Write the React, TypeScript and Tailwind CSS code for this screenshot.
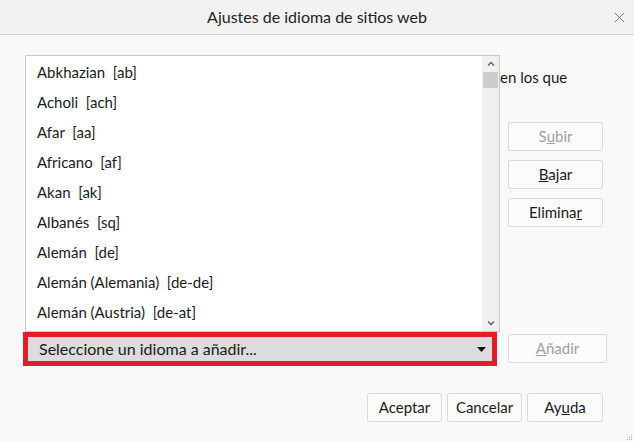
import { X } from "lucide-react";

const langs = [
  "Abkhazian  [ab]",
  "Acholi  [ach]",
  "Afar  [aa]",
  "Africano  [af]",
  "Akan  [ak]",
  "Albanés  [sq]",
  "Alemán  [de]",
  "Alemán (Alemania)  [de-de]",
  "Alemán (Austria)  [de-at]",
];

function Btn({ children, disabled, className }: any) {
  return (
    <div
      className={
        "h-[29px] flex items-center justify-center border border-[#dadada] bg-[#fbfbfb] rounded-[2px] text-[15px] " +
        (disabled ? "text-[#a0a0a0] " : "text-[#1a1a1a] ") +
        (className ?? "")
      }
    >
      {children}
    </div>
  );
}

export default function App() {
  return (
    <div
      className="w-[634px] h-[442px] bg-[#f9f9f9] text-[#1a1a1a] relative overflow-hidden"
      style={{ fontFamily: 'Lato, "Noto Sans", sans-serif' }}
    >
      {/* title bar */}
      <div className="h-[35px] bg-[#f2f2f2] border-b border-[#d2d2d2] flex items-center relative">
        <div className="flex-1 text-center text-[16px] text-[#222]">
          Ajustes de idioma de sitios web
        </div>
        <X className="absolute right-[6px] top-[9px] w-[17px] h-[17px] text-[#555]" strokeWidth={1.1} />
      </div>

      {/* intro text (mostly hidden by the open popup) */}
      <div className="flex pt-[32px] text-[15px] leading-[20px]">
        <span className="w-[500px] pl-[25px] overflow-hidden whitespace-nowrap text-right">
          Algunas páginas web se ofrecen en más de un idioma. Elija los idiomas
        </span>
        <span>en los que</span>
      </div>

      {/* active languages + move buttons */}
      <div className="flex pl-[25px] pr-[31px] mt-[35px] h-[200px] gap-[8px]">
        <div className="flex-1" />
        <div className="w-[95px] flex flex-col gap-[9px]">
          <Btn disabled>
            S<span className="underline">u</span>bir
          </Btn>
          <Btn>
            <span className="underline">B</span>ajar
          </Btn>
          <Btn>
            Elimina<span className="underline">r</span>
          </Btn>
        </div>
      </div>

      {/* select row */}
      <div className="flex items-start pl-[23px] mt-[10px] gap-[11px]">
        <div className="w-[474px] h-[34px] border-[5px] border-[#e21c2a] bg-[#dcdcdc] flex items-center pl-[11px] pr-[6px] text-[16px]">
          <span className="flex-1">Seleccione un idioma a añadir...</span>
          <svg width="9" height="5" viewBox="0 0 9 5">
            <path d="M0 0h9L4.5 5z" fill="#111" />
          </svg>
        </div>
        <Btn disabled className="w-[99px] mt-[2px]">
          <span className="underline">A</span>ñadir
        </Btn>
      </div>

      {/* dialog buttons */}
      <div className="flex justify-end gap-[5px] pr-[31px] pt-[27px]">
        <Btn className="w-[75px]">Aceptar</Btn>
        <Btn className="w-[75px]">Cancelar</Btn>
        <Btn className="w-[76px]">
          Ay<span className="underline">u</span>da
        </Btn>
      </div>

      {/* resize grip */}
      <svg className="absolute right-[1px] bottom-[1px]" width="8" height="8" viewBox="0 0 8 8">
        <rect x="6" y="2" width="1" height="1" fill="#b8b8b8" />
        <rect x="4" y="4" width="1" height="1" fill="#b8b8b8" />
        <rect x="6" y="4" width="1" height="1" fill="#b8b8b8" />
        <rect x="2" y="6" width="1" height="1" fill="#b8b8b8" />
        <rect x="4" y="6" width="1" height="1" fill="#b8b8b8" />
        <rect x="6" y="6" width="1" height="1" fill="#b8b8b8" />
      </svg>

      {/* open dropdown popup */}
      <div className="absolute left-[25px] top-[55px] w-[475px] h-[277px] bg-white border border-[#c8c8c8] flex">
        <div className="flex-1 flex flex-col pt-[1px]">
          {langs.map((l, k) => (
            <div key={k} className="h-[30px] flex items-center pl-[11px] text-[15px] whitespace-pre">
              {l}
            </div>
          ))}
        </div>
        <div className="w-[17px] bg-[#f0f0f0] flex flex-col items-center">
          <svg className="mt-[5px]" width="8" height="5" viewBox="0 0 8 5">
            <path d="M1 4.5L4 1.5L7 4.5" stroke="#606060" strokeWidth="1.4" fill="none" />
          </svg>
          <div className="w-[15px] h-[16px] bg-[#cdcdcd] mt-[6px]" />
          <div className="flex-1" />
          <svg className="mb-[5px]" width="8" height="5" viewBox="0 0 8 5">
            <path d="M1 0.5L4 3.5L7 0.5" stroke="#606060" strokeWidth="1.4" fill="none" />
          </svg>
        </div>
      </div>
    </div>
  );
}
